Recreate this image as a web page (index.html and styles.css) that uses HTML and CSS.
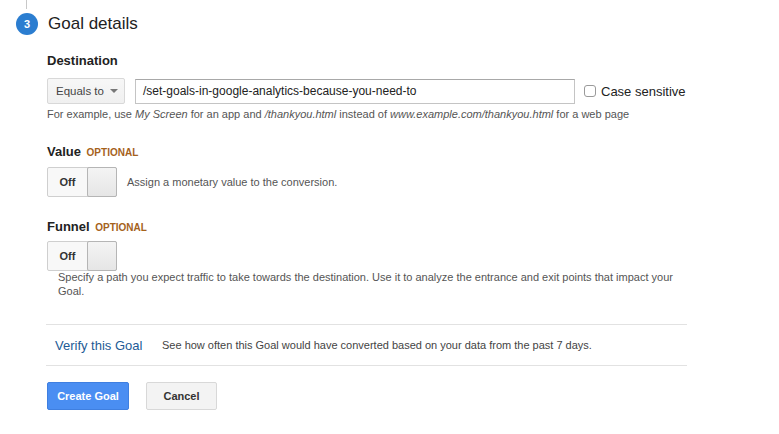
FILE: index.html
```html
<!DOCTYPE html>
<html>
<head>
<meta charset="utf-8">
<link rel="stylesheet" href="styles.css">
</head>
<body>
<div class="page">
  <div class="rail"></div>
  <div class="step-head">
    <span class="step-num">3</span>
    <h2 class="step-title">Goal details</h2>
  </div>
  <div class="content">
    <div class="field-label">Destination</div>
    <div class="dest-row">
      <div class="select">
        <span>Equals to</span>
        <span class="caret"></span>
      </div>
      <div class="text-input">/set-goals-in-google-analytics-because-you-need-to</div>
      <label class="check">
        <span class="box"></span>
        <span>Case sensitive</span>
      </label>
    </div>
    <div class="help">For example, use <i>My Screen</i> for an app and <i>/thankyou.html</i> instead of <i>www.example.com/thankyou.html</i> for a web page</div>

    <div class="field-label value-label">Value <span class="optional">OPTIONAL</span></div>
    <div class="toggle-row">
      <div class="toggle"><span class="toggle-off">Off</span><span class="toggle-thumb"></span></div>
      <span class="toggle-desc">Assign a monetary value to the conversion.</span>
    </div>

    <div class="field-label funnel-label">Funnel <span class="optional">OPTIONAL</span></div>
    <div class="toggle"><span class="toggle-off">Off</span><span class="toggle-thumb"></span></div>
    <div class="funnel-help">Specify a path you expect traffic to take towards the destination. Use it to analyze the entrance and exit points that impact your Goal.</div>

    <div class="verify">
      <a class="verify-link">Verify this Goal</a>
      <span class="verify-desc">See how often this Goal would have converted based on your data from the past 7 days.</span>
    </div>

    <div class="actions">
      <button class="btn btn-primary">Create Goal</button>
      <button class="btn btn-default">Cancel</button>
    </div>
  </div>
</div>
</body>
</html>
```
FILE: styles.css
```css
* { box-sizing: border-box; }
body {
  margin: 0;
  font-family: "Liberation Sans", Arial, Helvetica, sans-serif;
  color: #222;
  background: #fff;
}
.page { padding-left: 16px; }
.rail {
  width: 1px;
  height: 9px;
  margin-left: 10px;
  background: #c8c8c8;
}
.step-head {
  display: flex;
  align-items: center;
  gap: 10px;
  margin-top: 4px;
  height: 22px;
}
.step-num {
  width: 22px;
  height: 22px;
  border-radius: 50%;
  background: #2b7dd0;
  color: #fff;
  font-size: 11px;
  font-weight: bold;
  display: flex;
  align-items: center;
  justify-content: center;
}
.step-title {
  margin: 0;
  font-size: 17px;
  font-weight: normal;
  color: #222;
  line-height: 22px;
}
.content {
  margin-left: 31px;
  width: 640px;
}
.field-label {
  font-size: 13px;
  font-weight: bold;
  line-height: 16px;
  color: #222;
  margin-top: 18px;
}
.optional {
  font-size: 10px;
  color: #a5621b;
  margin-left: 2px;
}
.dest-row {
  display: flex;
  align-items: center;
  margin-top: 9px;
}
.select {
  width: 78px;
  height: 26px;
  border: 1px solid #d8d8d8;
  border-radius: 2px;
  background: linear-gradient(#f7f7f7, #f0f0f0);
  display: flex;
  align-items: center;
  justify-content: space-between;
  padding: 0 6px 0 8px;
  font-size: 11.5px;
  color: #444;
}
.caret {
  width: 0;
  height: 0;
  border-left: 4px solid transparent;
  border-right: 4px solid transparent;
  border-top: 4px solid #777;
}
.text-input {
  width: 440px;
  height: 25px;
  margin-left: 10px;
  border: 1px solid #c4c4c4;
  border-top-color: #a8a8a8;
  padding: 0 7px;
  font-size: 12px;
  line-height: 23px;
  color: #222;
}
.check {
  display: flex;
  align-items: center;
  margin-left: 9px;
  font-size: 13px;
  color: #222;
}
.box {
  width: 12px;
  height: 12px;
  border: 1px solid #9a9a9a;
  border-radius: 3px;
  margin-right: 5px;
  background: #fff;
}
.help {
  font-size: 11px;
  line-height: 14px;
  color: #555;
  margin-top: 3px;
}
.value-label { margin-top: 23px; }
.toggle-row {
  display: flex;
  align-items: center;
  gap: 10px;
  margin-top: 6px;
}
.toggle {
  display: flex;
  width: 70px;
  height: 30px;
  border: 1px solid #cfcfcf;
  border-radius: 2px;
  background: #f8f8f8;
}
.toggle-off {
  width: 39px;
  font-size: 11px;
  font-weight: bold;
  color: #333;
  display: flex;
  align-items: center;
  justify-content: center;
}
.toggle-thumb {
  flex: 1;
  margin: -1px -1px -1px 0;
  border: 1px solid #b5b5b5;
  border-radius: 2px;
  background: linear-gradient(#f4f4f4, #e6e6e6);
}
.toggle-desc {
  font-size: 11px;
  color: #555;
}
.funnel-label { margin-top: 22px; }
.funnel-label + .toggle { margin-top: 5px; }
.funnel-help {
  font-size: 11px;
  line-height: 14px;
  color: #555;
  margin: -1px 0 0 11px;
  width: 618px;
}
.verify {
  margin-top: 26px;
  margin-left: -1px;
  height: 42px;
  border-top: 1px solid #e2e2e2;
  border-bottom: 1px solid #e2e2e2;
  display: flex;
  align-items: center;
  padding-left: 9px;
}
.verify-link {
  font-size: 13px;
  color: #1d5b96;
  width: 107px;
}
.verify-desc {
  font-size: 11px;
  color: #444;
}
.actions {
  display: flex;
  gap: 17px;
  margin-top: 16px;
}
.btn {
  height: 28px;
  border-radius: 2px;
  font-family: inherit;
  font-size: 11px;
  font-weight: bold;
  padding: 0;
}
.btn-primary {
  width: 82px;
  background: #4a8ef2;
  border: 1px solid #3f7fe0;
  color: #fff;
}
.btn-default {
  width: 71px;
  background: #f3f3f3;
  border: 1px solid #d8d8d8;
  color: #333;
}
```
